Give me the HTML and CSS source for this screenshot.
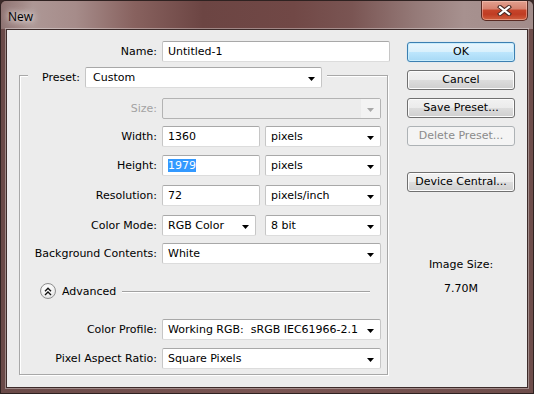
FILE: index.html
```html
<!DOCTYPE html>
<html>
<head>
<meta charset="utf-8">
<title>New</title>
<link rel="stylesheet" href="styles.css">
</head>
<body>
<div class="window">
  <div class="titlebar">
    <span class="title">New</span>
    <div class="close">
      <svg class="close-x" width="15" height="11" viewBox="0 0 15 11">
        <path d="M3 2 L12 9 M12 2 L3 9" stroke="#4b2a24" stroke-width="4.2" stroke-linecap="square" fill="none"/>
        <path d="M3 2 L12 9 M12 2 L3 9" stroke="#ffffff" stroke-width="2.2" stroke-linecap="square" fill="none"/>
      </svg>
    </div>
  </div>
  <div class="client">
    <div class="left">
      <div class="row name-row">
        <span class="lbl">Name:</span>
        <div class="field name-field">Untitled-1</div>
      </div>
      <div class="group">
        <div class="legend">
          <span class="plbl">Preset:</span>
          <div class="field select preset-field"><span>Custom</span><svg class="arrow" viewBox="0 0 7 4"><path d="M0 0h7L3.5 4z"/></svg></div>
        </div>
        <div class="row r-size">
          <span class="lbl dis">Size:</span>
          <div class="field disabled wide"><span></span><span class="ddpart"><svg class="arrow" viewBox="0 0 7 4"><path d="M0 0h7L3.5 4z"/></svg></span></div>
        </div>
        <div class="row r-width">
          <span class="lbl">Width:</span>
          <div class="field num">1360</div>
          <div class="field select unit"><span>pixels</span><svg class="arrow" viewBox="0 0 7 4"><path d="M0 0h7L3.5 4z"/></svg></div>
        </div>
        <div class="row r-height">
          <span class="lbl">Height:</span>
          <div class="field num"><span class="sel">1979</span></div>
          <div class="field select unit"><span>pixels</span><svg class="arrow" viewBox="0 0 7 4"><path d="M0 0h7L3.5 4z"/></svg></div>
        </div>
        <div class="row r-res">
          <span class="lbl">Resolution:</span>
          <div class="field num">72</div>
          <div class="field select unit"><span>pixels/inch</span><svg class="arrow" viewBox="0 0 7 4"><path d="M0 0h7L3.5 4z"/></svg></div>
        </div>
        <div class="row r-mode">
          <span class="lbl">Color Mode:</span>
          <div class="field select mode"><span>RGB Color</span><svg class="arrow" viewBox="0 0 7 4"><path d="M0 0h7L3.5 4z"/></svg></div>
          <div class="field select unit bits"><span>8 bit</span><svg class="arrow" viewBox="0 0 7 4"><path d="M0 0h7L3.5 4z"/></svg></div>
        </div>
        <div class="row r-bg">
          <span class="lbl">Background Contents:</span>
          <div class="field select wide"><span>White</span><svg class="arrow" viewBox="0 0 7 4"><path d="M0 0h7L3.5 4z"/></svg></div>
        </div>
        <div class="adv">
          <div class="advbtn">
            <svg width="8" height="9" viewBox="0 0 8 9"><path d="M1 4.2 L4 1.2 L7 4.2 M1 8 L4 5 L7 8" stroke="#111" stroke-width="1.4" fill="none"/></svg>
          </div>
          <span class="advtext">Advanced</span>
          <div class="advline"></div>
        </div>
        <div class="row r-cp">
          <span class="lbl">Color Profile:</span>
          <div class="field select wide"><span>Working RGB:&nbsp; sRGB IEC61966-2.1</span><svg class="arrow" viewBox="0 0 7 4"><path d="M0 0h7L3.5 4z"/></svg></div>
        </div>
        <div class="row r-par">
          <span class="lbl">Pixel Aspect Ratio:</span>
          <div class="field select wide"><span>Square Pixels</span><svg class="arrow" viewBox="0 0 7 4"><path d="M0 0h7L3.5 4z"/></svg></div>
        </div>
      </div>
    </div>
    <div class="right">
      <div class="btn ok">OK</div>
      <div class="btn">Cancel</div>
      <div class="btn">Save Preset...</div>
      <div class="btn disabled-btn">Delete Preset...</div>
      <div class="btn device">Device Central...</div>
      <div class="imgsize">Image Size:</div>
      <div class="imgval">7.70M</div>
    </div>
  </div>
</div>
</body>
</html>
```
FILE: styles.css
```css
* { box-sizing: border-box; }
html, body { margin: 0; padding: 0; }
body {
  width: 534px;
  height: 394px;
  overflow: hidden;
  background: #3b2a29;
  font-family: "DejaVu Sans", sans-serif;
  font-size: 11px;
  color: #000;
}
.window {
  width: 534px;
  height: 394px;
  border: 1px solid #2f2221;
  border-radius: 6px 6px 0 0;
  background: linear-gradient(90deg, #6a4a48 0%, #7a5553 50%, #6e4d4b 100%);
  display: flex;
  flex-direction: column;
  overflow: hidden;
}
.titlebar {
  height: 28px;
  flex: none;
  display: flex;
  align-items: flex-start;
  padding-left: 7px;
  background: linear-gradient(90deg, #8f7371 0%, #ad9795 6%, #a68c8a 14%, #88625f 25%, #6c4543 38%, #714846 55%, #7a5553 66%, #957a78 78%, #a7918f 87%, #a28c8a 100%);
}
.title {
  font-family: "Open Sans", sans-serif;
  font-size: 12px;
  line-height: 16px;
  margin-top: 8px;
  color: #000;
  text-shadow: 0 0 6px rgba(255,255,255,0.9), 0 0 10px rgba(255,255,255,0.7), 0 0 14px rgba(255,255,255,0.5);
}
.close {
  margin-left: auto;
  margin-right: 5px;
  width: 47px;
  height: 20px;
  border: 1px solid #5a2a22;
  border-top: none;
  border-radius: 0 0 5px 5px;
  background: linear-gradient(#e2a08f 0%, #d68370 40%, #c5442a 50%, #c03c23 70%, #d0603f 100%);
  box-shadow: inset 0 0 0 1px rgba(255, 210, 200, 0.45);
  display: flex;
  align-items: center;
  justify-content: center;
}
.client {
  flex: 1;
  margin: 0 5px 5px 5px;
  border: 1px solid #3d2b2a;
  background: #ececec;
  display: flex;
  box-shadow: 0 0 0 1px rgba(255,255,255,0.35);
}
.left {
  margin-left: 12px;
  padding-top: 11px;
  width: 369px;
  flex: none;
}
.right {
  margin-left: 19px;
  width: 108px;
  padding-top: 12px;
  display: flex;
  flex-direction: column;
  flex: none;
}
.row {
  display: flex;
  align-items: center;
  height: 21px;
}
.lbl {
  width: 137px;
  margin-right: 5px;
  text-align: right;
  white-space: nowrap;
  flex: none;
}
.lbl.dis { color: #a3a3a3; }
.name-row .lbl { width: 138px; }
.field {
  height: 21px;
  background: #fff;
  border: 1px solid #c6c6c6;
  border-top-color: #a8a8a8;
  border-bottom-color: #dcdcdc;
  border-radius: 2px;
  display: flex;
  align-items: center;
  padding: 0 6px 0 5px;
  line-height: 13px;
  white-space: nowrap;
  flex: none;
}
.select { justify-content: space-between; }
.arrow {
  width: 7px;
  height: 4px;
  margin-top: 2px;
  flex: none;
  fill: #000;
}
.name-field { width: 228px; }
.preset-field { width: 237px; padding-left: 7px; }
.wide { width: 219px; }
.num { width: 98px; }
.unit { width: 116px; margin-left: 5px; }
.mode { width: 94px; }
.bits { margin-left: 9px; }
.sel { background: #3399ff; color: #fff; }
.field.disabled {
  background: #ececec;
  border-color: #b3b3b3;
  padding-right: 0;
  justify-content: space-between;
}
.ddpart {
  width: 19px;
  height: 100%;
  background: #f3f3f3;
  display: flex;
  align-items: center;
  justify-content: center;
}
.ddpart .arrow { fill: #a8a8a8; margin-top: 2px; }
.group {
  margin-top: 13px;
  border: 1px solid #a8a8a8;
  box-shadow: 1px 1px 0 #fff, inset 1px 1px 0 #fff;
  padding-bottom: 5px;
}
.legend {
  display: flex;
  align-items: center;
  height: 21px;
  margin: -9px 0 0 8px;
  padding: 0 5px 0 14px;
  background: #ececec;
  width: fit-content;
}
.plbl { width: 39px; margin-right: 4px; white-space: nowrap; }
.r-size { margin-top: 10px; }
.r-width { margin-top: 7px; }
.r-height { margin-top: 8px; }
.r-res { margin-top: 9px; }
.r-mode { margin-top: 9px; }
.r-bg { margin-top: 7px; }
.r-cp { margin-top: 20px; }
.r-par { margin-top: 8px; }
.adv {
  display: flex;
  align-items: center;
  height: 16px;
  margin-top: 19px;
  padding-left: 20px;
}
.advbtn {
  width: 16px;
  height: 16px;
  border-radius: 50%;
  border: 1px solid #8e8e8e;
  background: radial-gradient(circle at 45% 35%, #ffffff 0%, #f4f4f4 45%, #d6d6d6 100%);
  display: flex;
  align-items: center;
  justify-content: center;
  flex: none;
}
.advtext { margin-left: 6px; line-height: 13px; }
.advline {
  flex: 1;
  height: 2px;
  border-top: 1px solid #a2a2a2;
  border-bottom: 1px solid #ffffff;
  margin: 1px 17px 0 6px;
}
.btn {
  height: 20px;
  border: 1px solid #707070;
  border-radius: 3px;
  background: linear-gradient(#f2f2f2 0%, #ebebeb 50%, #dddddd 50%, #cfcfcf 100%);
  box-shadow: inset 0 0 0 1px #fcfcfc;
  text-align: center;
  line-height: 18px;
  white-space: nowrap;
  flex: none;
}
.btn + .btn { margin-top: 8px; }
.btn.ok {
  border-color: #3c7fb1;
  background: linear-gradient(#eaf6fd 0%, #d9f0fc 50%, #bee6fd 50%, #a7d9f5 100%);
  box-shadow: inset 0 0 0 1px #c8ecfc, 0 0 1px #8ad2f7;
}
.btn.disabled-btn {
  border-color: #adb2b5;
  background: #f4f4f4;
  box-shadow: none;
  color: #8b8b8b;
}
.btn.device { margin-top: 26px; }
.imgsize {
  margin-top: 66px;
  text-align: center;
  line-height: 13px;
}
.imgval {
  margin-top: 11px;
  text-align: center;
  line-height: 13px;
}
```
